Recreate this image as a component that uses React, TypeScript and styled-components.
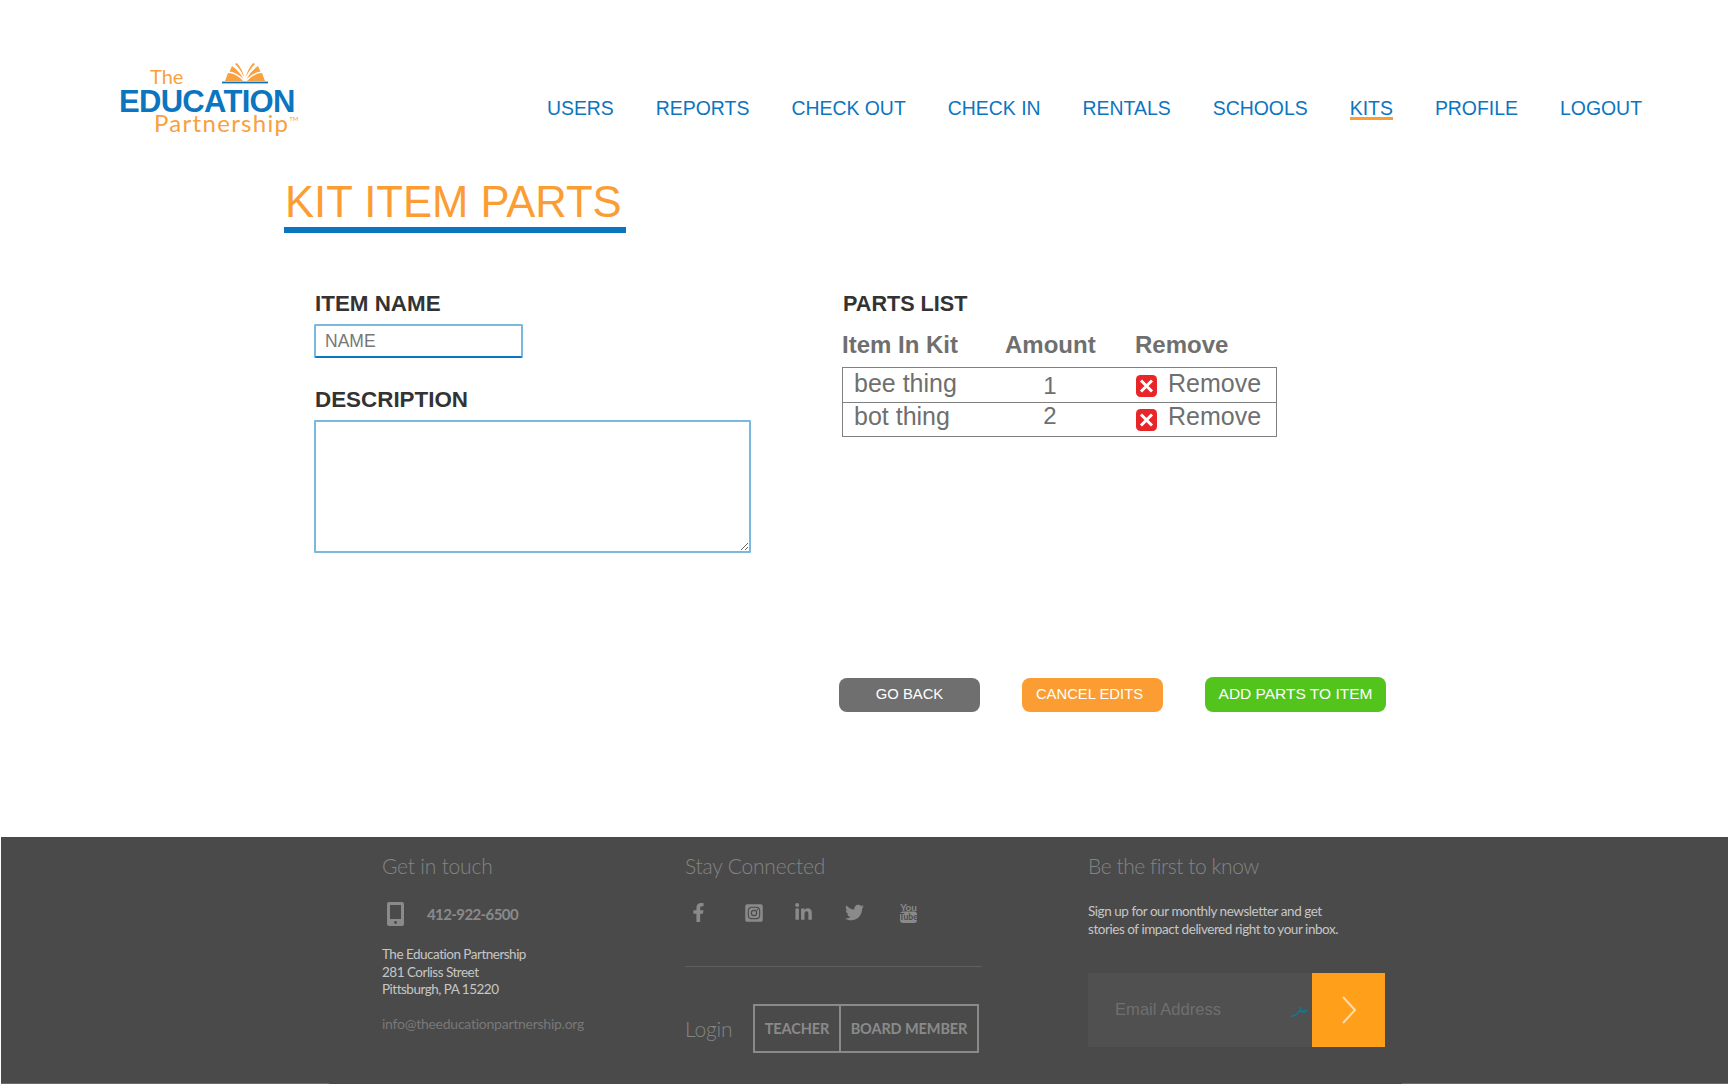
import React, { FC } from "react";
import styled, { createGlobalStyle } from "styled-components";
import { FaFacebookF, FaInstagramSquare, FaLinkedinIn, FaTwitter } from "react-icons/fa";

const BLUE = "#0c75c0";
const ORANGE = "#fb9d33";
const GREY = "#6f6f6f";
const FOOTER_TEXT = "#8a8a8a";

const GlobalStyle = createGlobalStyle`
  html, body {
    margin: 0;
    padding: 0;
    background: #fff;
    font-family: "Liberation Sans", Arial, sans-serif;
  }
  * { box-sizing: border-box; }
`;

const Page = styled.div`
  width: 1728px;
  height: 1084px;
  display: flex;
  flex-direction: column;
  overflow: hidden;
`;

const Header = styled.header`
  height: 178px;
  display: flex;
  justify-content: space-between;
  padding: 0 86px 0 119px;
`;

const Logo = styled.div`
  width: 176px;
  padding-top: 63px;
  display: flex;
  flex-direction: column;
`;

const LogoTop = styled.div`
  height: 21px;
  display: flex;
  align-items: flex-end;
  padding-left: 31px;
`;

const LogoThe = styled.span`
  width: 72px;
  font-family: "Lato", sans-serif;
  font-weight: 400;
  font-size: 20px;
  line-height: 16px;
  color: #f9a040;
`;

const LogoMain = styled.div`
  margin-top: 7px;
  font-weight: 700;
  font-size: 31px;
  line-height: 22px;
  letter-spacing: -0.7px;
  color: ${BLUE};
`;

const LogoSub = styled.div`
  margin-top: -2px;
  padding-left: 35px;
  font-family: "Lato", sans-serif;
  font-weight: 400;
  font-size: 24px;
  line-height: 24px;
  letter-spacing: 1.3px;
  white-space: nowrap;
  color: #f9a040;

  sup {
    font-size: 6px;
    line-height: 0;
    vertical-align: 11px;
    letter-spacing: 0;
  }
`;

const Nav = styled.nav`
  padding-top: 99px;
  display: flex;
  align-items: flex-start;
  gap: 42px;
`;

const NavLink = styled.a<{ $active?: boolean }>`
  font-size: 19.43px;
  line-height: 18px;
  color: ${BLUE};
  box-shadow: ${(p) => (p.$active ? `0 3px 0 ${ORANGE}` : "none")};
`;

const TitleBlock = styled.div`
  width: 342px;
  margin-left: 284px;
  padding-left: 1px;
  border-bottom: 6px solid ${BLUE};
`;

const Title = styled.h1`
  margin: 0;
  font-weight: 400;
  font-size: 43.6px;
  line-height: 49px;
  white-space: nowrap;
  color: ${ORANGE};
`;

const Columns = styled.main`
  margin-top: 58px;
  padding-left: 314px;
  display: grid;
  grid-template-columns: 528px 1fr;
  height: 386px;
`;

const Column = styled.section`
  display: flex;
  flex-direction: column;
  align-items: flex-start;
`;

const Label = styled.label<{ $gap?: number }>`
  margin: ${(p) => p.$gap ?? 0}px 0 0 1px;
  font-weight: 700;
  font-size: 22.4px;
  line-height: 26px;
  color: #333;
`;

const PartsTitle = styled.h2`
  margin: 0 0 0 1px;
  font-size: 21.6px;
  line-height: 26px;
  color: #333;
`;

const NameInput = styled.input`
  margin-top: 7px;
  width: 209px;
  height: 34px;
  padding: 0 0 0 9px;
  border: 2px solid #7ab8de;
  border-bottom-color: ${BLUE};
  border-radius: 2px;
  outline: none;
  font-family: inherit;
  font-size: 17.5px;

  &::placeholder {
    color: #777;
    opacity: 1;
  }
`;

const DescriptionInput = styled.textarea`
  display: block;
  margin-top: 7px;
  width: 437px;
  height: 133px;
  border: 2px solid #7ab8de;
  border-radius: 1px;
  outline: none;
`;

const TableHead = styled.div`
  margin-top: 14px;
  width: 435px;
  display: grid;
  grid-template-columns: 163px 130px 1fr;
  font-weight: 700;
  font-size: 24px;
  line-height: 28px;
  color: ${GREY};
`;

const Table = styled.div`
  margin-top: 8px;
  width: 435px;
  height: 70px;
  border: 1px solid #808080;
`;

const Row = styled.div<{ $line: number; $divided?: boolean }>`
  height: 34px;
  border-top: ${(p) => (p.$divided ? "1px solid #808080" : "none")};
  display: grid;
  grid-template-columns: 162px 130px 1fr;
  align-items: start;
  font-size: 25px;
  line-height: ${(p) => p.$line}px;
  color: ${GREY};
`;

const NameCell = styled.div`
  padding-left: 11px;
`;

const AmountCell = styled.div<{ $drop?: number }>`
  padding: ${(p) => p.$drop ?? 0}px 40px 0 0;
  font-size: 24px;
  text-align: center;
`;

const RemoveCell = styled.div`
  padding-left: 1px;
  display: flex;
  align-items: flex-start;
  gap: 11px;
`;

const RemoveIcon = styled.svg<{ $top: number }>`
  width: 21px;
  height: 22px;
  flex-shrink: 0;
  margin-top: ${(p) => p.$top}px;
`;

const Actions = styled.div`
  padding-left: 839px;
  display: flex;
  align-items: flex-end;
  gap: 42px;
`;

const ActionButton = styled.button<{ $color: string; $wide?: boolean }>`
  width: ${(p) => (p.$wide ? 181 : 141)}px;
  height: ${(p) => (p.$wide ? 35 : 34)}px;
  padding: 0 0 ${(p) => (p.$wide ? 2 : 3)}px;
  border: none;
  border-radius: 8px;
  background: ${(p) => p.$color};
  font-family: inherit;
  font-size: ${(p) => (p.$wide ? 15.5 : 14.8)}px;
  color: #fff;
`;

const CancelButton = styled(ActionButton)`
  padding-right: 6px;
`;

const Footer = styled.footer`
  position: relative;
  margin: auto 0 0 1px;
  height: 247px;
  padding: 16px 0 0 381px;
  display: grid;
  grid-template-columns: 303px 403px 1fr;
  background: #4a4a4a;
  font-family: "Lato", sans-serif;

  &::before,
  &::after {
    content: "";
    position: absolute;
    bottom: 0;
    height: 1px;
    background: #6b6b6b;
  }
  &::before {
    left: 0;
    width: 328px;
  }
  &::after {
    right: 0;
    width: 326px;
  }
`;

const FooterColumn = styled.div`
  display: flex;
  flex-direction: column;
  align-items: flex-start;
`;

const FooterHeading = styled.h3<{ $tight?: boolean }>`
  margin: 0;
  font-weight: 300;
  font-size: 21px;
  line-height: 26px;
  letter-spacing: ${(p) => (p.$tight ? -0.45 : -0.2)}px;
  color: #848484;
  white-space: nowrap;
`;

const PhoneRow = styled.div`
  margin-top: 23px;
  height: 24px;
  padding-left: 5px;
  display: flex;
  align-items: center;
  gap: 23px;
  font-weight: 700;
  font-size: 15px;
  letter-spacing: -0.6px;
  color: ${FOOTER_TEXT};
`;

const Address = styled.address`
  margin-top: 20px;
  font-style: normal;
  font-size: 13.5px;
  line-height: 17.5px;
  letter-spacing: -0.5px;
  color: #c6c6c6;
`;

const Email = styled.a`
  margin-top: 16px;
  font-size: 14px;
  line-height: 18px;
  letter-spacing: -0.25px;
  color: #787878;
`;

const SocialRow = styled.div`
  margin-top: 23px;
  padding-left: 10px;
  height: 21px;
  display: grid;
  grid-template-columns: repeat(5, 50px);
  align-items: center;
  color: ${FOOTER_TEXT};
`;

const FacebookIcon = styled(FaFacebookF)`
  margin-left: -6px;
`;

const InstagramIcon = styled(FaInstagramSquare)`
  margin-left: -1px;
`;

const LinkedinIcon = styled(FaLinkedinIn)`
  margin-left: -1px;
`;

const YoutubeIcon = styled.svg`
  margin-left: 5px;
  width: 17px;
  height: 21px;
`;

const FooterRule = styled.div`
  margin-top: 43px;
  width: 297px;
  height: 1px;
  background: #5f5f5f;
`;

const LoginRow = styled.div`
  margin-top: 37px;
  display: flex;
  align-items: center;
`;

const LoginLabel = styled.span`
  width: 68px;
  font-weight: 300;
  font-size: 21px;
  letter-spacing: -0.2px;
  color: #848484;
`;

const LoginBox = styled.div`
  width: 226px;
  height: 49px;
  display: flex;
  border: 2px solid ${FOOTER_TEXT};
`;

const LoginOption = styled.a<{ $width?: number }>`
  width: ${(p) => (p.$width ? `${p.$width}px` : "auto")};
  flex: ${(p) => (p.$width ? "none" : 1)};
  display: flex;
  align-items: center;
  justify-content: center;
  font-weight: 700;
  font-size: 14.5px;
  letter-spacing: -0.1px;
  color: ${FOOTER_TEXT};

  & + & {
    border-left: 2px solid ${FOOTER_TEXT};
  }
`;

const Newsletter = styled.p`
  margin: 24px 0 0;
  font-size: 13.5px;
  line-height: 17.5px;
  letter-spacing: -0.45px;
  color: #c6c6c6;
`;

const SignupForm = styled.form`
  margin-top: 35px;
  display: flex;
  width: 297px;
  height: 74px;
`;

const EmailField = styled.div`
  position: relative;
  width: 224px;
`;

const EmailInput = styled.input`
  width: 100%;
  height: 100%;
  padding: 0 0 0 27px;
  border: none;
  outline: none;
  background: #505050;
  font-family: "Liberation Sans", Arial, sans-serif;
  font-size: 16.6px;

  &::placeholder {
    color: #6f6f6f;
    opacity: 1;
  }
`;

const PasswordMark = styled.svg`
  position: absolute;
  right: 3px;
  top: 33px;
  width: 18px;
  height: 11px;
`;

const SubmitButton = styled.button`
  width: 73px;
  border: none;
  padding: 0;
  background: #ff9f1a;
  display: flex;
  align-items: center;
  justify-content: center;
`;

const BookLogo: FC = () => (
  <svg width="46" height="21" viewBox="0 0 46 21">
    <g fill="#f9a040">
      <path d="M3 18 L6 10 Q14 10 21 18 Z" />
      <path d="M7.5 8.5 L10 3 Q17 8 21.5 16 Q15 9.5 7.5 8.5 Z" />
      <path d="M13 1 L15 0 Q20 6 22.5 14.5 Q18 6 13 1 Z" />
      <path d="M43 18 L40 10 Q32 10 25 18 Z" />
      <path d="M38.5 8.5 L36 3 Q29 8 24.5 16 Q31 9.5 38.5 8.5 Z" />
      <path d="M33 1 L31 0 Q26 6 23.5 14.5 Q28 6 33 1 Z" />
    </g>
    <rect x="0" y="18.6" width="46" height="1.8" fill={BLUE} />
  </svg>
);

const CrossBadge: FC<{ top: number }> = ({ top }) => (
  <RemoveIcon $top={top} viewBox="0 0 21 22">
    <rect width="21" height="22" rx="4.5" fill="#e8262a" />
    <path d="M5 5.5 L16 16.5 M16 5.5 L5 16.5" stroke="#fff" strokeWidth="3" />
  </RemoveIcon>
);

const PhoneIcon: FC = () => (
  <svg width="17" height="24" viewBox="0 0 17 24">
    <rect width="17" height="24" rx="2" fill={FOOTER_TEXT} />
    <rect x="3" y="3" width="11" height="14" fill="#4a4a4a" />
    <circle cx="8.5" cy="20.5" r="1.4" fill="#4a4a4a" />
  </svg>
);

const Youtube: FC = () => (
  <YoutubeIcon viewBox="0 0 17 21">
    <text x="8.5" y="8.5" textAnchor="middle" fontSize="10" fontWeight="700" fill={FOOTER_TEXT}>
      You
    </text>
    <rect x="0" y="9.5" width="17" height="11.5" rx="3" fill={FOOTER_TEXT} />
    <text x="8.5" y="18" textAnchor="middle" fontSize="8.5" fontWeight="700" fill="#4a4a4a">
      Tube
    </text>
  </YoutubeIcon>
);

const navItems = ["USERS", "REPORTS", "CHECK OUT", "CHECK IN", "RENTALS", "SCHOOLS", "KITS", "PROFILE", "LOGOUT"];

const App: FC = () => {
  return (
    <Page>
      <GlobalStyle />
      <Header>
        <Logo>
          <LogoTop>
            <LogoThe>The</LogoThe>
            <BookLogo />
          </LogoTop>
          <LogoMain>EDUCATION</LogoMain>
          <LogoSub>
            Partnership<sup>TM</sup>
          </LogoSub>
        </Logo>
        <Nav>
          {navItems.map((item) => (
            <NavLink key={item} $active={item === "KITS"}>
              {item}
            </NavLink>
          ))}
        </Nav>
      </Header>

      <TitleBlock>
        <Title>KIT ITEM PARTS</Title>
      </TitleBlock>

      <Columns>
        <Column>
          <Label>ITEM NAME</Label>
          <NameInput placeholder="NAME" />
          <Label $gap={29}>DESCRIPTION</Label>
          <DescriptionInput />
        </Column>
        <Column>
          <PartsTitle>PARTS LIST</PartsTitle>
          <TableHead>
            <span>Item In Kit</span>
            <span>Amount</span>
            <span>Remove</span>
          </TableHead>
          <Table>
            <Row $line={30}>
              <NameCell>bee thing</NameCell>
              <AmountCell $drop={3}>1</AmountCell>
              <RemoveCell>
                <CrossBadge top={7} />
                Remove
              </RemoveCell>
            </Row>
            <Row $line={26} $divided>
              <NameCell>bot thing</NameCell>
              <AmountCell>2</AmountCell>
              <RemoveCell>
                <CrossBadge top={6} />
                Remove
              </RemoveCell>
            </Row>
          </Table>
        </Column>
      </Columns>

      <Actions>
        <ActionButton $color={GREY}>GO BACK</ActionButton>
        <CancelButton $color={ORANGE}>CANCEL EDITS</CancelButton>
        <ActionButton $color="#52c41c" $wide>
          ADD PARTS TO ITEM
        </ActionButton>
      </Actions>

      <Footer>
        <FooterColumn>
          <FooterHeading>Get in touch</FooterHeading>
          <PhoneRow>
            <PhoneIcon />
            412-922-6500
          </PhoneRow>
          <Address>
            The Education Partnership
            <br />
            281 Corliss Street
            <br />
            Pittsburgh, PA 15220
          </Address>
          <Email>info@theeducationpartnership.org</Email>
        </FooterColumn>
        <FooterColumn>
          <FooterHeading>Stay Connected</FooterHeading>
          <SocialRow>
            <FacebookIcon size={19} />
            <InstagramIcon size={20} />
            <LinkedinIcon size={19} />
            <FaTwitter size={19} />
            <Youtube />
          </SocialRow>
          <FooterRule />
          <LoginRow>
            <LoginLabel>Login</LoginLabel>
            <LoginBox>
              <LoginOption $width={84}>TEACHER</LoginOption>
              <LoginOption>BOARD MEMBER</LoginOption>
            </LoginBox>
          </LoginRow>
        </FooterColumn>
        <FooterColumn>
          <FooterHeading $tight>Be the first to know</FooterHeading>
          <Newsletter>
            Sign up for our monthly newsletter and get
            <br />
            stories of impact delivered right to your inbox.
          </Newsletter>
          <SignupForm>
            <EmailField>
              <EmailInput placeholder="Email Address" />
              <PasswordMark viewBox="0 0 18 11">
                <path d="M0 10.5 Q6 9 9 5 L10 1 M7 5.5 L17 4.5 M9 5 L14 7" stroke="#147a8c" strokeWidth="1.3" fill="none" />
              </PasswordMark>
            </EmailField>
            <SubmitButton type="button" aria-label="Submit">
              <svg width="16" height="28" viewBox="0 0 16 28">
                <polyline points="2,1 14,14 2,27" fill="none" stroke="#ffdcae" strokeWidth="2" />
              </svg>
            </SubmitButton>
          </SignupForm>
        </FooterColumn>
      </Footer>
    </Page>
  );
};

export default App;
